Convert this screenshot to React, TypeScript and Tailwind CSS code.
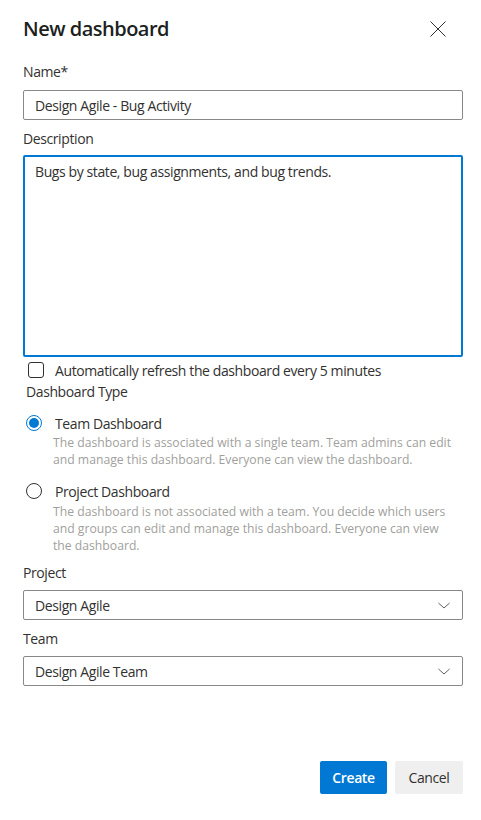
import React, { useState } from 'react';

const font = { fontFamily: '"Open Sans", "Noto Sans", sans-serif' };

function Chevron() {
  return (
    <svg width="12" height="7" viewBox="0 0 12 7" fill="none" stroke="#605e5c" strokeWidth="1">
      <path d="M0.5 1l5.5 5 5.5-5" />
    </svg>
  );
}

function Select({ value }: { value: string }) {
  return (
    <div className="flex h-[30px] items-center justify-between rounded-[2px] border border-[#8a8886] pl-[11px] pr-[12px] text-[14px] tracking-[-0.4px] text-[#323130]">
      <span>{value}</span>
      <Chevron />
    </div>
  );
}

function Radio({ checked }: { checked: boolean }) {
  return (
    <span
      className={
        checked
          ? 'flex h-4 w-4 items-center justify-center rounded-full border border-[#0078d4]'
          : 'flex h-4 w-4 items-center justify-center rounded-full border border-[#323130]'
      }
    >
      {checked && <span className="h-[10px] w-[10px] rounded-full bg-[#0078d4]" />}
    </span>
  );
}

export default function App() {
  const [name, setName] = useState('Design Agile - Bug Activity');
  const [desc, setDesc] = useState('Bugs by state, bug assignments, and bug trends.');

  return (
    <div className="h-[820px] w-[481px] bg-white pl-[23px] pr-[18px] text-[#323130]" style={font}>
      {/* header */}
      <div className="flex h-[58px] items-center justify-between">
        <h1 className="text-[20px] font-semibold tracking-[-0.5px] text-[#201f1e]">New dashboard</h1>
        <button className="mr-[17px] flex h-4 w-4 items-center justify-center">
          <svg width="16" height="16" viewBox="0 0 16 16" stroke="#323130" strokeWidth="1">
            <path d="M0.5 0.5l15 15M15.5 0.5l-15 15" />
          </svg>
        </button>
      </div>

      <div className="text-[14px] tracking-[-0.4px]">
        <label className="mt-[4px] block leading-[20px]">Name*</label>
        <input
          className="mt-[8px] block h-[30px] w-full rounded-[2px] border border-[#8a8886] px-[11px] text-[#323130] outline-none"
          value={name}
          onChange={(e) => setName(e.target.value)}
        />

        <label className="mt-[9px] block leading-[20px]">Description</label>
        <textarea
          className="mt-[6px] block h-[202px] w-full resize-none rounded-[2px] border-2 border-[#0078d4] px-[10px] py-[5px] leading-[20px] text-[#323130] outline-none"
          value={desc}
          onChange={(e) => setDesc(e.target.value)}
        />

        <div className="mt-[3px] flex h-[20px] items-center pl-[5px]">
          <span className="h-4 w-4 rounded-[3px] border border-[#323130]" />
          <span className="ml-[11px]">Automatically refresh the dashboard every 5 minutes</span>
        </div>

        <div className="mt-[2px] pl-[3px] leading-[20px]">Dashboard Type</div>

        <div className="mt-[11px] flex h-[20px] items-center pl-[3px]">
          <Radio checked />
          <span className="ml-[13px]">Team Dashboard</span>
        </div>
        <p className="ml-[30px] whitespace-nowrap pt-[1px] text-[12.2px] leading-[17px] tracking-[0px] text-[#a19f9d]">
          The dashboard is associated with a single team. Team admins can edit
          <br />
          and manage this dashboard. Everyone can view the dashboard.
        </p>

        <div className="mt-[13px] flex h-[20px] items-center pl-[3px]">
          <Radio checked={false} />
          <span className="ml-[13px]">Project Dashboard</span>
        </div>
        <p className="ml-[30px] whitespace-nowrap pt-[2px] text-[12.2px] leading-[17px] tracking-[0px] text-[#a19f9d]">
          The dashboard is not associated with a team. You decide which users
          <br />
          and groups can edit and manage this dashboard. Everyone can view
          <br />
          the dashboard.
        </p>

        <label className="mt-[9px] block leading-[20px]">Project</label>
        <div className="mt-[7px]">
          <Select value="Design Agile" />
        </div>

        <label className="mt-[9px] block leading-[20px]">Team</label>
        <div className="mt-[7px]">
          <Select value="Design Agile Team" />
        </div>

        <div className="mt-[75px] flex justify-end gap-[8px]">
          <button className="h-[33px] w-[67px] rounded-[2px] bg-[#0078d4] font-semibold text-white">
            Create
          </button>
          <button className="h-[33px] w-[68px] rounded-[2px] bg-[#efefef] text-[#323130]">
            Cancel
          </button>
        </div>
      </div>
    </div>
  );
}
